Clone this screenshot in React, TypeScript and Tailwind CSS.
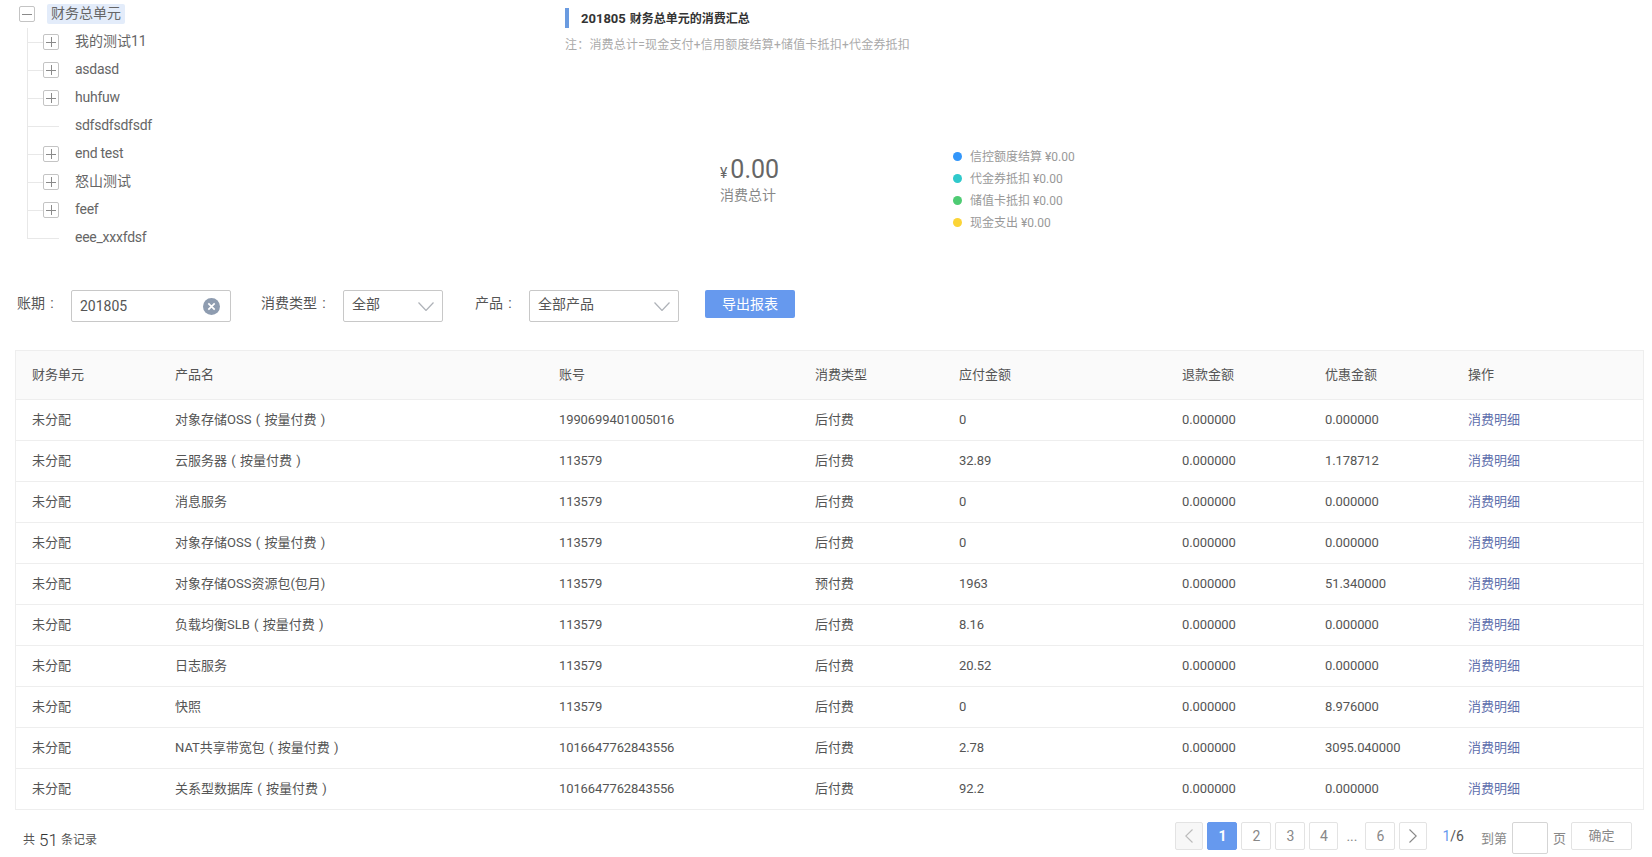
const font = "font-['Roboto','Noto_Sans_CJK_SC',sans-serif]";

const treeNodes = [
  { name: "我的测试11", leaf: false, latin: false },
  { name: "asdasd", leaf: false, latin: true },
  { name: "huhfuw", leaf: false, latin: true },
  { name: "sdfsdfsdfsdf", leaf: true, latin: true },
  { name: "end test", leaf: false, latin: true },
  { name: "怒山测试", leaf: false, latin: false },
  { name: "feef", leaf: false, latin: true },
  { name: "eee_xxxfdsf", leaf: true, latin: true },
];

const legend = [
  { label: "信控额度结算 ¥0.00", dot: "bg-[#3296fa]" },
  { label: "代金券抵扣 ¥0.00", dot: "bg-[#2fc9cb]" },
  { label: "储值卡抵扣 ¥0.00", dot: "bg-[#4ecb73]" },
  { label: "现金支出 ¥0.00", dot: "bg-[#fbd437]" },
];

const rows = [
  ["对象存储OSS（按量付费）", "1990699401005016", "后付费", "0", "0.000000", "0.000000"],
  ["云服务器（按量付费）", "113579", "后付费", "32.89", "0.000000", "1.178712"],
  ["消息服务", "113579", "后付费", "0", "0.000000", "0.000000"],
  ["对象存储OSS（按量付费）", "113579", "后付费", "0", "0.000000", "0.000000"],
  ["对象存储OSS资源包(包月)", "113579", "预付费", "1963", "0.000000", "51.340000"],
  ["负载均衡SLB（按量付费）", "113579", "后付费", "8.16", "0.000000", "0.000000"],
  ["日志服务", "113579", "后付费", "20.52", "0.000000", "0.000000"],
  ["快照", "113579", "后付费", "0", "0.000000", "8.976000"],
  ["NAT共享带宽包（按量付费）", "1016647762843556", "后付费", "2.78", "0.000000", "3095.040000"],
  ["关系型数据库（按量付费）", "1016647762843556", "后付费", "92.2", "0.000000", "0.000000"],
];

const headers = ["财务单元", "产品名", "账号", "消费类型", "应付金额", "退款金额", "优惠金额", "操作"];

// fullwidth brackets sit in the middle of their box in the original font
function ProductName({ text }: { text: string }) {
  return (
    <>
      {text.split(/([（）])/).map((part, i) =>
        part === "（" ? (
          <span key={i} className="inline-block w-[13px] text-center">(</span>
        ) : part === "）" ? (
          <span key={i} className="inline-block w-[13px] text-center">)</span>
        ) : (
          <span key={i}>{part}</span>
        )
      )}
    </>
  );
}

function Colon() {
  return <span className="inline-block w-[14px] text-center">:</span>;
}

function ToggleBox({ open }: { open?: boolean }) {
  return (
    <span className="flex h-4 w-4 shrink-0 items-center justify-center rounded-[2px] border border-[#c4c4c4] bg-white">
      <svg width="10" height="10" viewBox="0 0 10 10" stroke="#8a8a8a" strokeWidth="1">
        <path d="M0 5.5h10" />
        {!open && <path d="M5.5 0v10" />}
      </svg>
    </span>
  );
}

function Chevron() {
  return (
    <svg width="16" height="9" viewBox="0 0 16 9" fill="none" stroke="#aeb2b8" strokeWidth="1.2">
      <path d="M0.5 0.5L8 8.5L15.5 0.5" />
    </svg>
  );
}

function Select({ value, width }: { value: string; width: string }) {
  return (
    <div className={`flex h-8 items-center justify-between rounded-[2px] border border-[#c8c8c8] pl-2 pr-2 text-sm text-[#555] ${width}`}>
      <span className="-mt-1">{value}</span>
      <Chevron />
    </div>
  );
}

function PageBtn({ children, active, disabled, width = "w-[30px]" }: { children: React.ReactNode; active?: boolean; disabled?: boolean; width?: string }) {
  return (
    <span
      className={`flex h-7 items-center justify-center rounded-[2px] border text-sm ${width} ${
        active
          ? "border-[#6699ee] bg-[#6699ee] font-bold text-white"
          : disabled
            ? "border-[#e3e3e3] bg-[#f7f7f7] text-[#bbb]"
            : "border-[#e3e3e3] bg-white text-[#888]"
      }`}
    >
      {children}
    </span>
  );
}

function Arrow({ left }: { left?: boolean }) {
  return (
    <svg width="8" height="14" viewBox="0 0 8 14" fill="none" stroke="currentColor" strokeWidth="1.1">
      <path d={left ? "M7.5 0.5L0.8 7L7.5 13.5" : "M0.5 0.5L7.2 7L0.5 13.5"} />
    </svg>
  );
}

export default function App() {
  return (
    <div className={`h-[857px] w-[1652px] overflow-hidden bg-white text-[#555] ${font}`}>
      {/* top: tree + summary */}
      <div className="flex h-[290px]">
        <div className="w-[565px] shrink-0">
          <div className="flex h-7 items-center pl-[19px]">
            <ToggleBox open />
            <span className="ml-3 flex h-5 items-center rounded-[2px] bg-[#e3ecfa] px-1 pb-[2px] text-sm text-[#666]">财务总单元</span>
          </div>
          <div className="ml-[27px] h-[211px] border-l border-[#e8e8e8]">
            {treeNodes.map((node) => (
              <div key={node.name} className="flex h-7 items-center">
                <span className={`border-t border-[#e8e8e8] ${node.leaf ? "w-[31px]" : "w-[15px]"}`} />
                {!node.leaf && <ToggleBox />}
                <span className={`ml-4 pb-[2px] text-sm text-[#666] ${node.latin ? "tracking-[-0.25px]" : ""}`}>{node.name}</span>
              </div>
            ))}
          </div>
        </div>

        <div className="pt-2">
          <div className="flex h-5 items-center border-l-4 border-[#6a9be0] pl-3 pt-[2px] text-[13px] font-bold text-[#333]">
            201805<span className="ml-1 text-xs">财务总单元的消费汇总</span>
          </div>
          <div className="mt-[7px] text-xs leading-5 tracking-[0.2px] text-[#aaa]">注：消费总计=现金支付+信用额度结算+储值卡抵扣+代金券抵扣</div>
          <div className="mt-[90px] flex items-start">
            <div className="ml-[155px] mt-2 w-[58px] whitespace-nowrap">
              <div className="flex h-[34px] items-baseline text-[#666]">
                <span className="mr-[3px] text-sm">¥</span>
                <span className="text-[25px] leading-[34px]">0.00</span>
              </div>
              <div className="-mt-[2px] text-sm leading-5 text-[#888]">消费总计</div>
            </div>
            <div className="ml-[175px]">
              {legend.map((item) => (
                <div key={item.label} className="flex h-[22px] items-center whitespace-nowrap text-xs text-[#999]">
                  <span className={`mr-[8px] h-[9px] w-[9px] rounded-full ${item.dot}`} />
                  <span className="pt-[2px]">{item.label}</span>
                </div>
              ))}
            </div>
          </div>
        </div>
      </div>

      {/* filters */}
      <div className="flex items-start pl-[17px] text-sm">
        <span className="mt-[3px] w-[54px]">账期<Colon /></span>
        <div className="flex h-8 w-[160px] items-center justify-between rounded-[2px] border border-[#c8c8c8] pl-2 pr-[10px] text-[#555]">
          <span>201805</span>
          <svg width="17" height="17" viewBox="0 0 16 16">
            <circle cx="8" cy="8" r="8" fill="#8e9cb0" />
            <path d="M5 5l6 6M11 5l-6 6" stroke="#fff" strokeWidth="1.6" />
          </svg>
        </div>
        <span className="ml-[30px] mt-[3px] w-[82px]">消费类型<Colon /></span>
        <Select value="全部" width="w-[100px]" />
        <span className="ml-[32px] mt-[3px] w-[54px]">产品<Colon /></span>
        <Select value="全部产品" width="w-[150px]" />
        <button className="ml-[26px] h-7 w-[90px] rounded-[2px] bg-[#6699ee] text-sm text-white">导出报表</button>
      </div>

      {/* table */}
      <div className="ml-[15px] mt-[28px] w-[1629px] border border-[#eeeeee] border-b-0 text-[13px]">
        <div className="grid h-[49px] grid-cols-[143px_384px_256px_144px_223px_143px_143px_191px] items-center border-b border-[#eeeeee] bg-[#fafafa]">
          {headers.map((h) => (
            <div key={h} className="pl-4">{h}</div>
          ))}
        </div>
        {rows.map((row, i) => (
          <div key={i} className="grid h-[41px] grid-cols-[143px_384px_256px_144px_223px_143px_143px_191px] items-center border-b border-[#eeeeee]">
            <div className="pl-4">未分配</div>
            {row.map((cell, j) =>
              j === 0 ? (
                <div key={j} className="whitespace-nowrap pl-4"><ProductName text={cell} /></div>
              ) : (
                <div key={j} className="whitespace-nowrap pl-4 tracking-[-0.1px]">{cell}</div>
              )
            )}
            <div className="pl-4 text-[#5f70ad]">消费明细</div>
          </div>
        ))}
      </div>

      {/* footer */}
      <div className="flex items-start justify-between pl-[23px] pr-[20px] pt-[12px]">
        <div className="mt-[7px] flex items-center text-xs">
          共<span className="ml-[4px] mr-[3px] text-[17px] font-light text-[#333]">51</span>条记录
        </div>
        <div className="flex items-start text-[#888]">
          <div className="flex items-center gap-1">
            <PageBtn disabled width="w-[28px]"><Arrow left /></PageBtn>
            <PageBtn active>1</PageBtn>
            <PageBtn>2</PageBtn>
            <PageBtn>3</PageBtn>
            <PageBtn width="w-[29px]">4</PageBtn>
            <span className="w-[19px] text-center text-sm">...</span>
            <PageBtn>6</PageBtn>
            <PageBtn width="w-[28px]"><Arrow /></PageBtn>
          </div>
          <span className="ml-[15px] flex h-7 items-center text-sm"><span className="text-[#6699ee]">1</span><span className="text-[#555]">/6</span></span>
          <span className="ml-[17px] flex h-8 items-center pt-[2px] text-[13px]">到第</span>
          <span className="ml-[5px] h-8 w-9 rounded-[2px] border border-[#d5d5d5]" />
          <span className="ml-[5px] flex h-8 items-center pt-[2px] text-[13px]">页</span>
          <span className="ml-[5px] flex h-7 w-[61px] items-center justify-center rounded-[2px] border border-[#e3e3e3] text-[13px]">确定</span>
        </div>
      </div>
    </div>
  );
}
